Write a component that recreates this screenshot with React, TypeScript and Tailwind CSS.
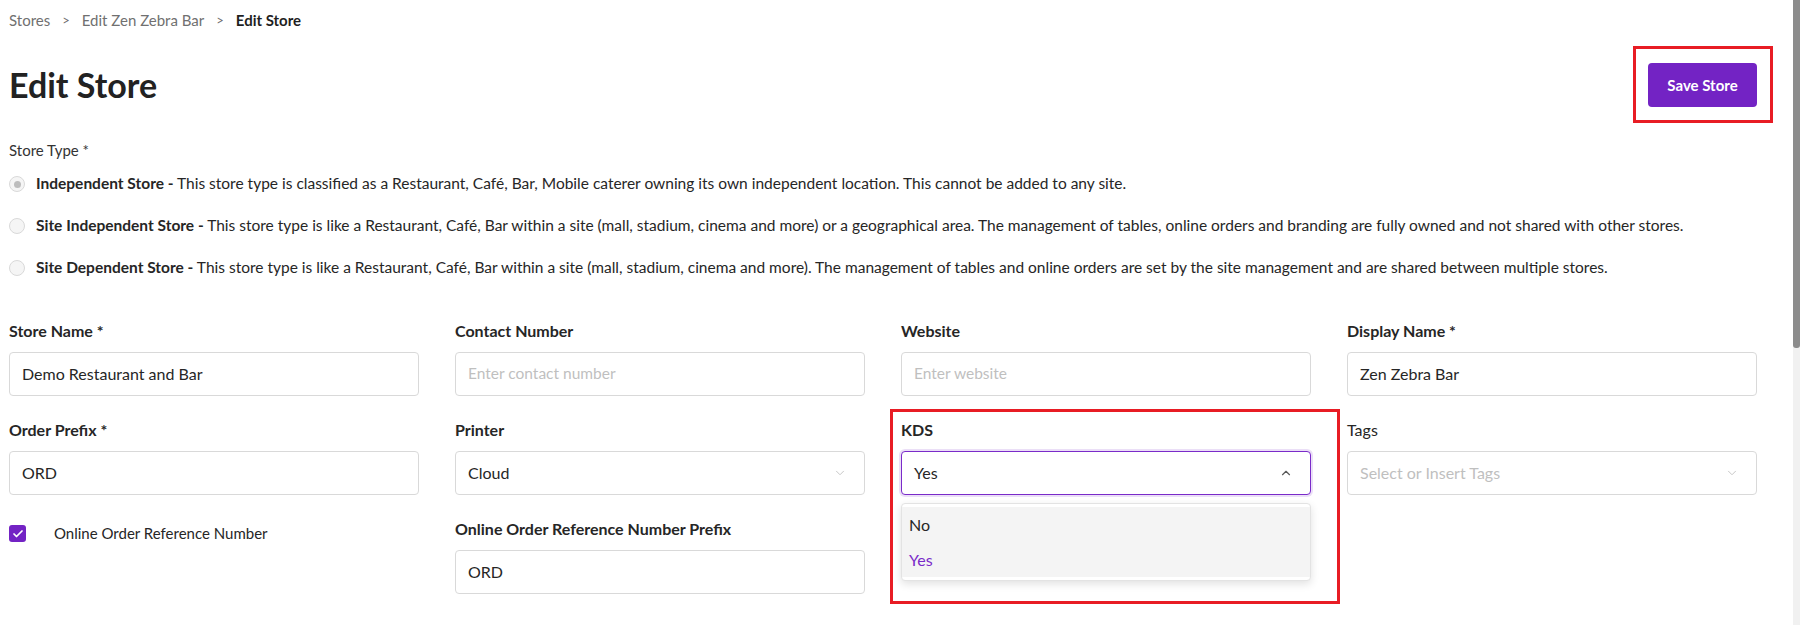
import { ChevronDown, ChevronUp, Check } from 'lucide-react';

const FONT = "font-['Lato','Liberation_Sans',sans-serif]";

type RadioOption = { title: string; text: string; checked?: boolean };

const storeTypes: RadioOption[] = [
  {
    title: 'Independent Store -',
    text: 'This store type is classified as a Restaurant, Café, Bar, Mobile caterer owning its own independent location. This cannot be added to any site.',
    checked: true,
  },
  {
    title: 'Site Independent Store -',
    text: 'This store type is like a Restaurant, Café, Bar within a site (mall, stadium, cinema and more) or a geographical area. The management of tables, online orders and branding are fully owned and not shared with other stores.',
  },
  {
    title: 'Site Dependent Store -',
    text: 'This store type is like a Restaurant, Café, Bar within a site (mall, stadium, cinema and more). The management of tables and online orders are set by the site management and are shared between multiple stores.',
  },
];

function Label({ children, bold = true }: { children: React.ReactNode; bold?: boolean }) {
  return (
    <div className={`h-5 leading-5 text-[#262626] mb-[11px] ${bold ? 'font-bold text-[16px]' : 'text-[16px]'}`}>
      {children}
    </div>
  );
}

function TextField({ label, value, placeholder, bold = true }: { label: string; value?: string; placeholder?: string; bold?: boolean }) {
  return (
    <div>
      <Label bold={bold}>{label}</Label>
      <div className="h-[44px] rounded-[4px] border border-[#d9d9d9] bg-white px-3 flex items-center text-[16px]">
        {value ? (
          <span className="text-[#262626]">{value}</span>
        ) : (
          <span className="text-[#bfbfbf] text-[15.5px]">{placeholder}</span>
        )}
      </div>
    </div>
  );
}

function SelectField({ label, value, placeholder, bold = true }: { label: string; value?: string; placeholder?: string; bold?: boolean }) {
  return (
    <div>
      <Label bold={bold}>{label}</Label>
      <div className="h-[44px] rounded-[4px] border border-[#d9d9d9] bg-white pl-3 pr-[17px] flex items-center justify-between text-[16px]">
        {value ? (
          <span className="text-[#262626]">{value}</span>
        ) : (
          <span className="text-[#bfbfbf]">{placeholder}</span>
        )}
        <ChevronDown className="h-3.5 w-3.5 text-[#bfbfbf]" strokeWidth={1.5} />
      </div>
    </div>
  );
}

function KdsField() {
  return (
    <div className="relative">
      <div className="pointer-events-none absolute left-[-11px] top-[-11px] w-[450px] h-[195px] border-[3px] border-[#e81c24] z-20" />
      <Label>KDS</Label>
      <div className="h-[44px] rounded-[4px] border border-[#7a2bc9] bg-white pl-3 pr-[17px] flex items-center justify-between text-[16px] shadow-[0_0_0_2px_rgba(122,43,201,0.15)]">
        <span className="text-[#262626]">Yes</span>
        <ChevronUp className="h-3.5 w-3.5 text-[#595959]" strokeWidth={2} />
      </div>
      <div className="absolute left-0 right-0 top-[83px] z-10 rounded-[4px] border border-[#e3e3e3] bg-white py-[3px] shadow-[0_3px_8px_rgba(0,0,0,0.12)]">
        <div className="h-[35px] flex items-center px-[7px] bg-[#f4f4f4] text-[16px] text-[#262626]">No</div>
        <div className="h-[35px] flex items-center px-[7px] bg-[#f4f4f4] text-[16px] text-[#7a2bc9]">Yes</div>
      </div>
    </div>
  );
}

export default function App() {
  return (
    <div className={`${FONT} w-full h-[625px] overflow-hidden flex bg-white`}>
      <div className="flex-1 pl-[9px] pr-[36px] pt-[10px]">
        {/* breadcrumb */}
        <div className="h-5 leading-5 text-[15px] text-[#707070] flex items-center gap-[12px]">
          <span>Stores</span>
          <span className="text-[13px]">&gt;</span>
          <span>Edit Zen Zebra Bar</span>
          <span className="text-[13px]">&gt;</span>
          <span className="font-bold text-[#1f1f1f]">Edit Store</span>
        </div>

        <div className="mt-[33px] flex items-center justify-between">
          <h1 className="text-[34px] font-bold text-[#222] leading-none">Edit Store</h1>
          <div className="relative">
            <div className="pointer-events-none absolute left-[-15px] right-[-16px] top-[-17px] bottom-[-16px] border-[3px] border-[#e81c24]" />
            <button
              type="button"
              className="h-[44px] w-[109px] rounded-[4px] bg-[#7323c4] text-white text-[15px] font-bold"
            >
              Save Store
            </button>
          </div>
        </div>

        <div className="mt-[33px] h-5 leading-5 text-[15px] text-[#333]">Store Type *</div>

        <div className="mt-[14px] flex flex-col gap-[22px]">
          {storeTypes.map((opt) => (
            <div key={opt.title} className="h-5 flex items-center text-[15.5px] text-[#262626]">
              <span className="mr-[11px] flex h-4 w-4 shrink-0 items-center justify-center rounded-full border border-[#d9d9d9] bg-[#f5f5f5]">
                {opt.checked && <span className="h-[7px] w-[7px] rounded-full bg-[#bdbdbd]" />}
              </span>
              <span className="whitespace-nowrap">
                <span className="font-bold">{opt.title}</span> {opt.text}
              </span>
            </div>
          ))}
        </div>

        <div className="mt-[43px] grid grid-cols-4 gap-x-[36px] gap-y-[24px]">
          <TextField label="Store Name *" value="Demo Restaurant and Bar" />
          <TextField label="Contact Number" placeholder="Enter contact number" />
          <TextField label="Website" placeholder="Enter website" />
          <TextField label="Display Name *" value="Zen Zebra Bar" />

          <TextField label="Order Prefix *" value="ORD" />
          <SelectField label="Printer" value="Cloud" />
          <KdsField />
          <SelectField label="Tags" placeholder="Select or Insert Tags" bold={false} />

          <div className="flex items-start pt-[6px]">
            <span className="flex h-[17px] w-[17px] items-center justify-center rounded-[3px] bg-[#7323c4]">
              <Check className="h-3 w-3 text-white" strokeWidth={3.5} />
            </span>
            <span className="ml-[28px] text-[15px] leading-[17px] text-[#262626]">Online Order Reference Number</span>
          </div>
          <TextField label="Online Order Reference Number Prefix" value="ORD" />
          <div />
          <div />
        </div>
      </div>

      {/* scrollbar */}
      <div className="w-[7px] h-full bg-[#f1f1f1] flex flex-col">
        <div className="h-[348px] w-full bg-[#8c8c8c] rounded-b-[3px]" />
      </div>
    </div>
  );
}
